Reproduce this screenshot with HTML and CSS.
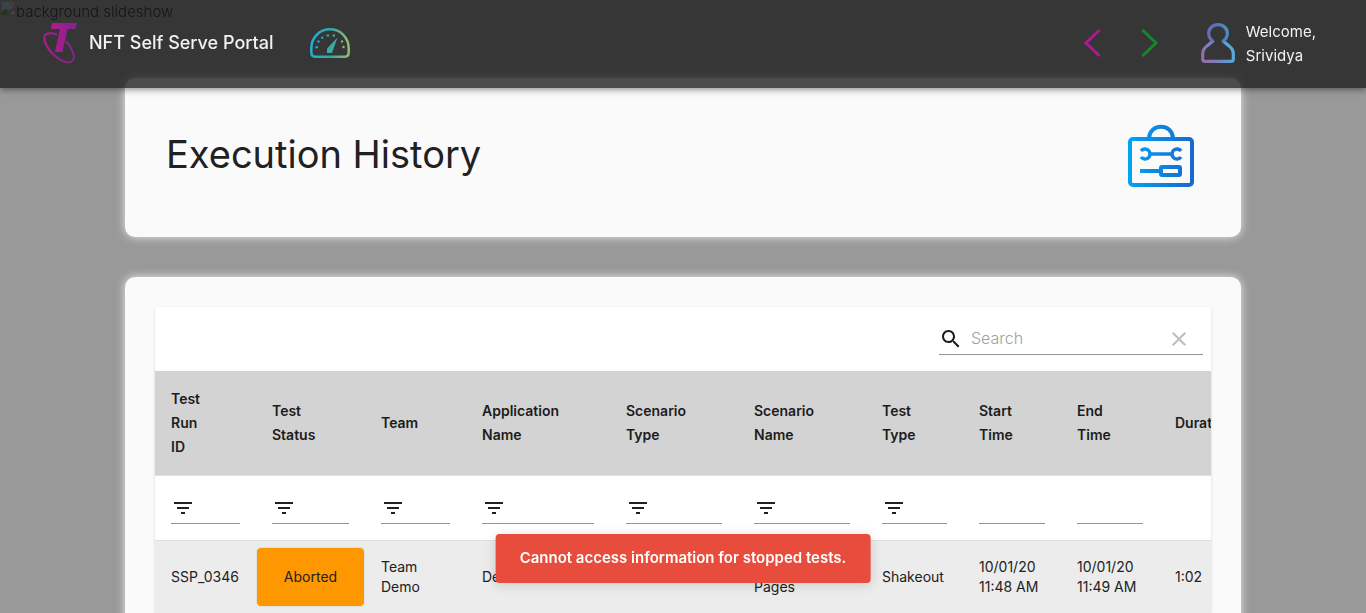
FILE: index.html
```
<!DOCTYPE html>
<html lang="en">
<head>
<meta charset="utf-8">
<title>NFT Self Serve Portal</title>
<link rel="stylesheet" href="styles.css">
</head>
<body>
<div class="backdrop">
  <svg class="broken" width="16" height="16" viewBox="0 0 16 16" aria-hidden="true"><path d="M1 1h10l4 4-3 4-3 2-2 4H1z" fill="#b9cdf2" stroke="#888"/><path d="M1 12q4-5 8-1l-2 4H1z" fill="#4a9a35"/><path d="M11 1v4h4M15 9v6H9z" fill="#eee" stroke="#888"/></svg><span>background slideshow</span>
</div>
<header class="appbar">
  <a class="brand" href="#">
    <svg class="logo" width="34" height="41" viewBox="0 0 34 41" aria-hidden="true">
      <defs><linearGradient id="gLogo" x1="0" x2="1"><stop offset="0" stop-color="#b01b8e"/><stop offset="1" stop-color="#80248c"/></linearGradient></defs>
      <path d="M14 11.500C9 10 3.500 9.500 1.900 12.500C-.5 17 5 27 12 33C18 38.300 26 41.500 29.500 37.800C33 34 29 25 23 18" fill="none" stroke="url(#gLogo)" stroke-width="2"/>
      <path d="M9 0H34L32.500 6H24.500L19.500 29H12L17 6H8z" fill="url(#gLogo)"/>
    </svg>
    <span class="brand-name">NFT Self Serve Portal</span>
  </a>
  <a class="gauge" href="#" aria-label="Dashboard">
    <svg width="40" height="30" viewBox="0 0 40 30">
      <defs><linearGradient id="gGauge" x1="0" y1="0" x2="1" y2="0"><stop offset="0" stop-color="#22b0d4"/><stop offset=".5" stop-color="#32a5a8"/><stop offset="1" stop-color="#94bb6a"/></linearGradient></defs>
      <path d="M5 28.700Q1.300 28.700 1.300 24V20.500C1.300 9.500 9.500 1.300 20 1.300S38.700 9.500 38.700 20.500V24Q38.700 28.700 35 28.700z" fill="none" stroke="url(#gGauge)" stroke-width="2.500"/>
      <path d="M27.500 9.500L17 20.500V25H22z" fill="#38aaa5"/>
      <path d="M5.500 19.500l2.500-.5M7.500 13l2 1M11.500 9l1.500 1.500M16.500 7.500h2.500M22.500 7.500h2.500M31 14l2-1M32.500 18.500l2 1" stroke="url(#gGauge)" stroke-width="2"/>
    </svg>
  </a>
  <nav class="pager">
    <button type="button" aria-label="Previous"><svg width="18" height="30" viewBox="0 0 18 30"><path d="M16.500 2L3 15L16.500 28" fill="none" stroke="#a81c93" stroke-width="3"/></svg></button>
    <button type="button" aria-label="Next"><svg width="18" height="30" viewBox="0 0 18 30"><path d="M1.500 2L15 15L1.500 28" fill="none" stroke="#16882c" stroke-width="3"/></svg></button>
  </nav>
  <a class="user" href="#">
    <svg width="34" height="40" viewBox="0 0 34 40" aria-hidden="true">
      <defs><linearGradient id="gUser" gradientUnits="userSpaceOnUse" x1="2" y1="36" x2="32" y2="22"><stop offset="0" stop-color="#946bac"/><stop offset=".35" stop-color="#7b80bd"/><stop offset=".75" stop-color="#5a9fd6"/><stop offset="1" stop-color="#4fb4e8"/></linearGradient>
      <linearGradient id="gUserTop" gradientUnits="userSpaceOnUse" x1="6" y1="12" x2="27" y2="8"><stop offset="0" stop-color="#7068b0"/><stop offset=".5" stop-color="#5c70b4"/><stop offset="1" stop-color="#4690cf"/></linearGradient></defs>
      <path d="M12.500 17.500L6 23Q1.700 26 1.700 31V36Q1.700 38.300 4 38.300H30Q32.300 38.300 32.300 36V31Q32.300 26 28 23L21.500 17.500" fill="none" stroke="url(#gUser)" stroke-width="3.200"/>
      <path d="M12.500 18.500Q7.700 15.500 7.700 10.500C7.700 5.500 11.500 1.700 17 1.700S26.300 5.500 26.300 10.500Q26.300 15.500 21.500 18.500" fill="none" stroke="url(#gUserTop)" stroke-width="3.200"/>
    </svg>
    <span>Welcome,<br>Srividya</span>
  </a>
</header>
<main class="page">
  <section class="card hero">
    <h1>Execution History</h1>
    <svg width="68" height="64" viewBox="0 0 68 64" aria-hidden="true">
      <defs><linearGradient id="gBox" gradientUnits="userSpaceOnUse" x1="0" y1="0" x2="68" y2="0"><stop offset="0" stop-color="#00a5f3"/><stop offset="1" stop-color="#1b66cc"/></linearGradient></defs>
      <g fill="none" stroke="url(#gBox)" stroke-width="4">
        <rect x="3" y="15" width="62" height="46" rx="3"/>
        <path d="M22 14C23 -1 45 -1 46 14" />
        <path d="M24 30L46 30.050" stroke-width="3.500"/>
        <path d="M14 27a5 5 0 1 1 0 6M54 27a5 5 0 1 0 0 6" stroke-width="3.500"/>
        <path d="M13 47L32 47.050"/>
        <rect x="34" y="43" width="19" height="8" rx="1"/>
      </g>
    </svg>
  </section>
  <section class="card list">
    <div class="paper">
      <div class="toolbar">
        <label class="search">
          <svg width="24" height="24" viewBox="0 0 24 24" aria-label="Search"><path fill="#1c1c1c" d="M15.500 14h-.79l-.28-.27C15.410 12.590 16 11.110 16 9.500 16 5.910 13.090 3 9.500 3S3 5.910 3 9.500 5.910 16 9.500 16c1.610 0 3.090-.59 4.230-1.570l.27.28v.79l5 4.990L20.490 19l-4.990-5zm-6 0C7.010 14 5 11.990 5 9.500S7.010 5 9.500 5 14 7.010 14 9.500 11.990 14 9.500 14z"/></svg>
          <input type="text" placeholder="Search">
          <button type="button" aria-label="Clear"><svg width="24" height="24" viewBox="0 0 24 24"><path fill="#bdbdbd" d="M19 6.410L17.590 5 12 10.590 6.410 5 5 6.410 10.590 12 5 17.590 6.410 19 12 13.410 17.590 19 19 17.590 13.410 12z"/></svg></button>
        </label>
      </div>
      <div class="scroller">
        <table>
          <colgroup><col class="c101"><col class="c109"><col class="c101"><col class="c144"><col class="c128"><col class="c128"><col class="c97"><col class="c98"><col class="c98"><col class="c101"></colgroup>
          <thead>
            <tr><th>Test<br>Run<br>ID</th><th>Test<br>Status</th><th>Team</th><th>Application<br>Name</th><th>Scenario<br>Type</th><th>Scenario<br>Name</th><th>Test<br>Type</th><th>Start<br>Time</th><th>End<br>Time</th><th>Duration</th></tr>
          </thead>
          <tbody>
            <tr class="filters">
              <td><label class="filter"><svg width="24" height="24" viewBox="0 0 24 24"><path d="M10 18h4v-2h-4v2zM3 6v2h18V6H3zm3 7h12v-2H6v2z"/></svg><input aria-label="Filter by test run ID"></label></td>
              <td><label class="filter"><svg width="24" height="24" viewBox="0 0 24 24"><path d="M10 18h4v-2h-4v2zM3 6v2h18V6H3zm3 7h12v-2H6v2z"/></svg><input aria-label="Filter by test status"></label></td>
              <td><label class="filter"><svg width="24" height="24" viewBox="0 0 24 24"><path d="M10 18h4v-2h-4v2zM3 6v2h18V6H3zm3 7h12v-2H6v2z"/></svg><input aria-label="Filter by team"></label></td>
              <td><label class="filter"><svg width="24" height="24" viewBox="0 0 24 24"><path d="M10 18h4v-2h-4v2zM3 6v2h18V6H3zm3 7h12v-2H6v2z"/></svg><input aria-label="Filter by application name"></label></td>
              <td><label class="filter"><svg width="24" height="24" viewBox="0 0 24 24"><path d="M10 18h4v-2h-4v2zM3 6v2h18V6H3zm3 7h12v-2H6v2z"/></svg><input aria-label="Filter by scenario type"></label></td>
              <td><label class="filter"><svg width="24" height="24" viewBox="0 0 24 24"><path d="M10 18h4v-2h-4v2zM3 6v2h18V6H3zm3 7h12v-2H6v2z"/></svg><input aria-label="Filter by scenario name"></label></td>
              <td><label class="filter"><svg width="24" height="24" viewBox="0 0 24 24"><path d="M10 18h4v-2h-4v2zM3 6v2h18V6H3zm3 7h12v-2H6v2z"/></svg><input aria-label="Filter by test type"></label></td>
              <td><label class="filter"><input aria-label="Start time"></label></td>
              <td><label class="filter"><input aria-label="End time"></label></td>
              <td></td>
            </tr>
            <tr class="run">
              <td>SSP_0346</td><td class="status"><button type="button">Aborted</button></td><td>Team<br>Demo</td><td>Demo</td><td></td><td><br>Pages</td><td>Shakeout</td><td>10/01/20<br>11:48 AM</td><td>10/01/20<br>11:49 AM</td><td>1:02</td>
            </tr>
          </tbody>
        </table>
      </div>
    </div>
  </section>
</main>
<div class="toast" role="alert">Cannot access information for stopped tests.</div>
</body>
</html>
```
FILE: styles.css
```
* { box-sizing: border-box; }
body {
  margin: 0;
  background: #999;
  color: #212121;
  font: 16px/24px Inter, "Liberation Sans", sans-serif;
}
a { color: inherit; text-decoration: none; }
button { padding: 0; border: 0; background: none; font: inherit; color: inherit; cursor: pointer; }
svg { display: block; flex: none; }

.backdrop { position: fixed; top: 0; left: 0; display: flex; color: #000; font-size: 15px; font-weight: 300; }

.appbar {
  position: fixed;
  top: 0;
  left: 0;
  right: 0;
  z-index: 2;
  display: flex;
  align-items: center;
  height: 88px;
  padding: 0 50px 2px 43px;
  background: rgba(27, 27, 27, .784);
  color: #f2f2f2;
  box-shadow: 0 2px 4px -1px rgba(0, 0, 0, .2), 0 4px 5px rgba(0, 0, 0, .14), 0 1px 10px rgba(0, 0, 0, .12);
}
.brand { display: flex; align-items: center; gap: 12px; }
.brand-name { font-size: 18px; font-weight: 500; }
.gauge { margin-left: 36px; }
.pager { display: flex; gap: 40px; margin-left: auto; }
.user { display: flex; align-items: center; gap: 11px; margin-left: 42px; font-size: 15px; }
.user span { padding-top: 2px; }

.page { padding: 78px 125px 40px; }
.card {
  background: #fafafa;
  border-radius: 10px;
  box-shadow: 0 0 10px rgba(255, 255, 255, .8);
}
.hero {
  display: flex;
  align-items: center;
  justify-content: space-between;
  height: 159px;
  padding: 0 46px 4px 41px;
}
.hero h1 { margin: 0; padding-bottom: 4px; font-size: 38px; line-height: 48px; font-weight: 400; }
.list { margin-top: 40px; padding: 30px; }
.paper {
  background: #fff;
  border-radius: 4px;
  box-shadow: 0 2px 1px -1px rgba(0, 0, 0, .2), 0 1px 1px rgba(0, 0, 0, .14), 0 1px 3px rgba(0, 0, 0, .12);
}
.toolbar { display: flex; justify-content: flex-end; height: 64px; padding: 16px 8px; }
.search {
  display: flex;
  align-items: center;
  width: 264px;
  height: 32px;
  padding-right: 12px;
  border-bottom: 1px solid #949494;
}
.search input {
  flex: 1;
  min-width: 0;
  margin-left: 8px;
  padding: 0 0 2px;
  border: 0;
  outline: 0;
  background: none;
  font: inherit;
  font-weight: 300;
}
.search input::placeholder { color: #a0a0a0; }

.scroller { overflow: hidden; }
table { width: 1105px; table-layout: fixed; border-collapse: separate; border-spacing: 0; font-size: 14px; line-height: 20px; }
.c97 { width: 97px; }
.c98 { width: 98px; }
.c101 { width: 101px; }
.c109 { width: 109px; }
.c128 { width: 128px; }
.c144 { width: 144px; }
th, td { padding: 16px; text-align: left; border-bottom: 1px solid #e0e0e0; }
th { background: #d3d3d3; color: #1c1c1c; font-size: 14px; line-height: 24px; font-weight: 600; white-space: nowrap; }
.filters td { height: 65px; }
.filter { display: flex; align-items: center; height: 32px; border-bottom: 1px solid #949494; }
.filter svg { fill: #212121; }
.filter input { flex: 1; width: 0; min-width: 0; height: 24px; padding: 0; border: 0; outline: 0; background: none; font: inherit; }
.run td { height: 73px; background: #ececec; white-space: nowrap; }
.run .status { padding: 6px 0; }
.status button { display: block; width: 100%; height: 60px; border: 1px solid #e0e0e0; border-radius: 5px; background: #ff9800; }

.toast {
  position: fixed;
  bottom: 30px;
  left: 50%;
  z-index: 3;
  transform: translateX(-50%);
  padding: 12px 24px 13px;
  border-radius: 4px;
  background: #e74c3c;
  color: #fff;
  font-size: 15px;
  font-weight: 600;
  white-space: nowrap;
  box-shadow: 0 2px 12px rgba(0, 0, 0, .15);
}
```
